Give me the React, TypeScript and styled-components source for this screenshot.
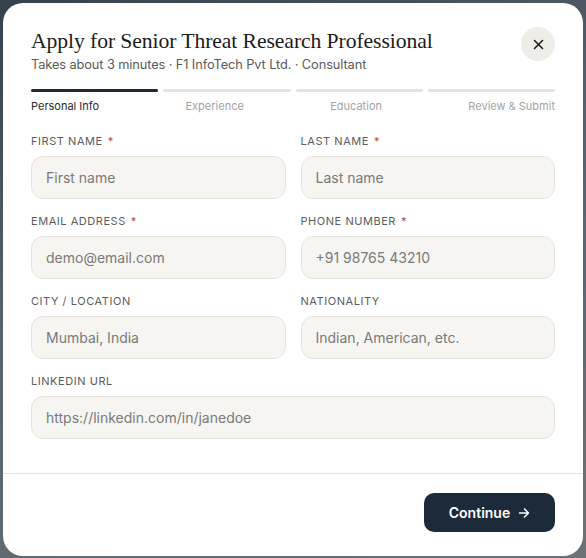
import React from "react";
import styled, { createGlobalStyle } from "styled-components";

const GlobalStyle = createGlobalStyle`
  html, body { margin: 0; padding: 0; }
  body {
    width: 586px;
    height: 558px;
    overflow: hidden;
    background: linear-gradient(160deg, #36414d 0%, #55606a 40%, #6c7277 100%);
    font-family: "Inter", "Noto Sans", sans-serif;
  }
  * { box-sizing: border-box; }
`;

const Backdrop = styled.div`
  width: 586px;
  height: 558px;
  padding: 3px 3px 2px 3px;
  display: flex;
`;

const Modal = styled.div`
  width: 580px;
  height: 553px;
  background: #ffffff;
  border-radius: 20px;
  display: flex;
  flex-direction: column;
  overflow: hidden;
`;

const Body = styled.div`
  flex: 1;
  padding: 23px 28px 0 28px;
  display: flex;
  flex-direction: column;
`;

const Header = styled.div`
  display: flex;
  justify-content: space-between;
  align-items: flex-start;
`;

const TitleBlock = styled.div`
  display: flex;
  flex-direction: column;
`;

const Title = styled.h2`
  margin: 0;
  font-family: "Liberation Serif", "DejaVu Serif", serif;
  font-weight: 400;
  font-size: 21.7px;
  line-height: 30px;
  color: #1b1b1b;
  letter-spacing: -0.1px;
`;

const Subtitle = styled.div`
  font-size: 12.8px;
  line-height: 18px;
  color: #5a5a5a;
  letter-spacing: -0.1px;
`;

const CloseButton = styled.button`
  width: 34px;
  height: 34px;
  margin-top: 1px;
  border-radius: 50%;
  border: none;
  background: #efede8;
  display: flex;
  align-items: center;
  justify-content: center;
  padding: 0;
  color: #1b1b1b;
`;

const Stepper = styled.div`
  margin-top: 15px;
  display: flex;
  flex-direction: column;
  gap: 7px;
`;

const Bars = styled.div`
  display: grid;
  grid-template-columns: repeat(4, 1fr);
  gap: 5px;
`;

const Bar = styled.div<{ $active?: boolean }>`
  height: 3px;
  border-radius: 2px;
  background: ${(p) => (p.$active ? "#1d2a39" : "#e4e2dc")};
`;

const StepLabels = styled.div`
  display: flex;
  justify-content: space-between;
`;

const StepLabel = styled.span<{ $active?: boolean }>`
  font-size: 11px;
  line-height: 14px;
  color: ${(p) => (p.$active ? "#2a2a2a" : "#a3a3a3")};
`;

const Form = styled.div`
  margin-top: 21px;
  display: grid;
  grid-template-columns: 1fr 1fr;
  column-gap: 15px;
  row-gap: 15px;
`;

const Field = styled.div<{ $full?: boolean }>`
  display: flex;
  flex-direction: column;
  gap: 8px;
  grid-column: ${(p) => (p.$full ? "1 / -1" : "auto")};
`;

const Label = styled.label`
  font-size: 11px;
  line-height: 14px;
  letter-spacing: 0.55px;
  color: #5c5c5c;
  font-weight: 400;
  text-transform: uppercase;
`;

const Req = styled.span`
  color: #c0463c;
  margin-left: 5px;
`;

const Input = styled.input`
  height: 43px;
  width: 100%;
  border: 1px solid #e5e3dc;
  background: #f6f5f1;
  border-radius: 12px;
  padding: 0 14px;
  font-family: "Inter", "Noto Sans", sans-serif;
  font-size: 14px;
  color: #222;
  outline: none;
  &::placeholder {
    color: #7a7a7a;
  }
`;

const Footer = styled.div`
  border-top: 1px solid #e5e3dc;
  padding: 19px 28px 24px 28px;
  display: flex;
  justify-content: flex-end;
`;

const ContinueButton = styled.button`
  height: 39px;
  width: 131px;
  border: none;
  border-radius: 10px;
  background: #1c2a3a;
  color: #ffffff;
  font-family: "Inter", "Noto Sans", sans-serif;
  font-size: 14px;
  font-weight: 600;
  display: flex;
  align-items: center;
  justify-content: center;
  gap: 8px;
`;

const fields: { label: string; placeholder: string; req?: boolean; full?: boolean }[] = [
  { label: "First Name", placeholder: "First name", req: true },
  { label: "Last Name", placeholder: "Last name", req: true },
  { label: "Email Address", placeholder: "demo@email.com", req: true },
  { label: "Phone Number", placeholder: "+91 98765 43210", req: true },
  { label: "City / Location", placeholder: "Mumbai, India" },
  { label: "Nationality", placeholder: "Indian, American, etc." },
  { label: "LinkedIn URL", placeholder: "https://linkedin.com/in/janedoe", full: true },
];

const steps = ["Personal Info", "Experience", "Education", "Review & Submit"];

export default function App() {
  return (
    <>
      <GlobalStyle />
      <Backdrop>
        <Modal>
          <Body>
            <Header>
              <TitleBlock>
                <Title>Apply for Senior Threat Research Professional</Title>
                <Subtitle>Takes about 3 minutes · F1 InfoTech Pvt Ltd. · Consultant</Subtitle>
              </TitleBlock>
              <CloseButton aria-label="Close">
                <svg width="11" height="11" viewBox="0 0 11 11">
                  <path d="M1.5 1.5 L9.5 9.5 M9.5 1.5 L1.5 9.5" stroke="#1b1b1b" strokeWidth="1.6" strokeLinecap="round" />
                </svg>
              </CloseButton>
            </Header>
            <Stepper>
              <Bars>
                {steps.map((s, i) => (
                  <Bar key={s} $active={i === 0} />
                ))}
              </Bars>
              <StepLabels>
                {steps.map((s, i) => (
                  <StepLabel key={s} $active={i === 0}>
                    {s}
                  </StepLabel>
                ))}
              </StepLabels>
            </Stepper>
            <Form>
              {fields.map((f) => (
                <Field key={f.label} $full={f.full}>
                  <Label>
                    {f.label}
                    {f.req && <Req>*</Req>}
                  </Label>
                  <Input placeholder={f.placeholder} />
                </Field>
              ))}
            </Form>
          </Body>
          <Footer>
            <ContinueButton>
              Continue
              <svg width="12" height="12" viewBox="0 0 12 12">
                <path d="M1.5 6 H10.5 M6.5 2 L10.5 6 L6.5 10" stroke="#fff" strokeWidth="1.5" fill="none" strokeLinecap="round" strokeLinejoin="round" />
              </svg>
            </ContinueButton>
          </Footer>
        </Modal>
      </Backdrop>
    </>
  );
}
